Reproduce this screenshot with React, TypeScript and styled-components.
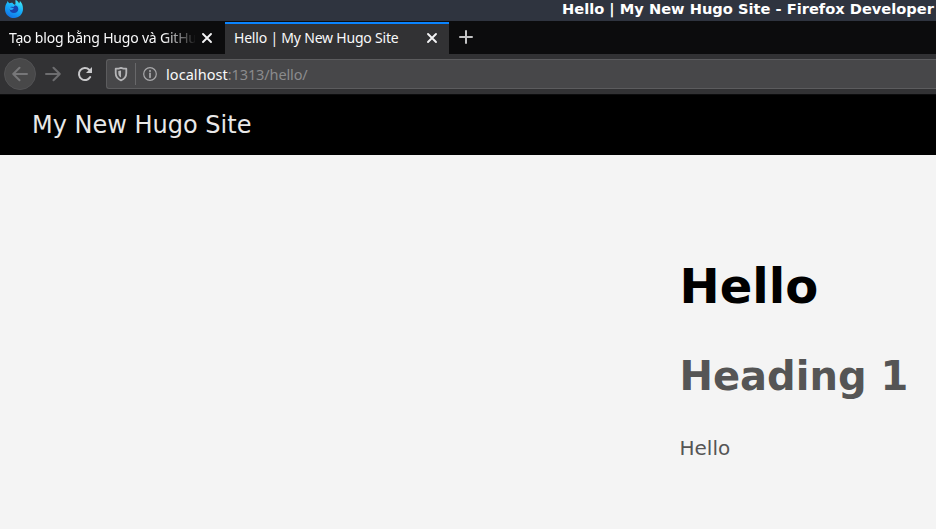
import React from "react";
import styled, { createGlobalStyle } from "styled-components";

const GlobalStyle = createGlobalStyle`
  * { box-sizing: border-box; }
  body { margin: 0; overflow: hidden; }
`;

const Window = styled.div`
  width: 936px;
  height: 529px;
  display: flex;
  flex-direction: column;
  overflow: hidden;
  background: #f4f4f4;
  font-family: "DejaVu Sans", sans-serif;
`;

const TitleBar = styled.header`
  flex: 0 0 21px;
  display: flex;
  justify-content: space-between;
  padding: 0 0 0 4px;
  background: #2f343f;
  color: #fff;
`;

const WindowTitle = styled.div`
  width: 374px;
  font: bold 14.64px/18px "DejaVu Sans", sans-serif;
  white-space: nowrap;
`;

const TabStrip = styled.div`
  flex: 0 0 33px;
  display: flex;
  background: #0c0c0d;
`;

const Tab = styled.div<{ $active?: boolean }>`
  width: ${(p) => (p.$active ? 224 : 225)}px;
  display: flex;
  align-items: center;
  padding: 0 9px;
  border-top: 2px solid ${(p) => (p.$active ? "#0a84ff" : "transparent")};
  margin-top: ${(p) => (p.$active ? 1 : 0)}px;
  padding-bottom: ${(p) => (p.$active ? 1 : 0)}px;
  background: ${(p) => (p.$active ? "#323234" : "transparent")};
  color: #f9f9fa;
`;

const TabLabel = styled.span<{ $fade?: boolean }>`
  flex: 0 0 186px;
  overflow: hidden;
  white-space: nowrap;
  font: 14px/24px "Noto Sans", sans-serif;
  letter-spacing: -0.2px;
  padding-bottom: 2px;
  ${(p) => p.$fade && "mask-image: linear-gradient(to right, #000 154px, transparent 188px);"}
`;

const CloseIcon = styled.svg`
  flex: none;
  width: 12px;
  height: 12px;
  margin: 0 0 2px 6px;
`;

const NewTab = styled.div`
  width: 34px;
  display: grid;
  place-items: center;
  padding-bottom: 1px;
`;

const Toolbar = styled.div`
  flex: 0 0 41px;
  display: flex;
  align-items: center;
  padding: 0 0 1px 4px;
  background: #323234;
  border-bottom: 1px solid #0c0c0d;
`;

const NavButton = styled.div<{ $round?: boolean }>`
  width: 32px;
  height: 32px;
  display: grid;
  place-items: center;
  padding-left: ${(p) => (p.$round ? 0 : 2)}px;
  border-radius: 50%;
  border: 1px solid ${(p) => (p.$round ? "#525254" : "transparent")};
  background: ${(p) => (p.$round ? "#484849" : "transparent")};
`;

const UrlBar = styled.div`
  flex: 1;
  height: 30px;
  margin-left: 6px;
  display: flex;
  align-items: center;
  padding-left: 7px;
  border: 1px solid #5c5c5e;
  border-right: 0;
  border-radius: 3px 0 0 3px;
  background: #474749;
`;

const Separator = styled.div`
  width: 1px;
  height: 22px;
  margin: 0 7px;
  background: #68686a;
`;

const Address = styled.div`
  margin-left: 9px;
  font: 14.5px/24px "Noto Sans", sans-serif;
  letter-spacing: -0.12px;
  color: #8b8b8d;
`;

const Host = styled.span`
  color: #f9f9fa;
  letter-spacing: 0.06px;
`;

const SiteHeader = styled.div`
  flex: 0 0 60px;
  padding: 1px 32px 0;
  background: #000;
  color: #e8e8e8;
  font-size: 24px;
  line-height: 59px;
`;

const Article = styled.main`
  padding: 103px 0 0 679.5px;
  color: #555;
  white-space: nowrap;
`;

const PageTitle = styled.h1`
  margin: 0;
  color: #000;
  font-size: 48px;
  line-height: 56px;
`;

const Heading = styled.h2`
  margin: 39px 0 0;
  font-size: 40px;
  line-height: 47px;
`;

const Paragraph = styled.p`
  margin: 36px 0 0;
  font-size: 20px;
  line-height: 24px;
`;

const Close = () => (
  <CloseIcon viewBox="0 0 12 12" fill="none" stroke="#f4f4f5" strokeWidth="1.9" strokeLinecap="round">
    <path d="M2 2l8 8M10 2l-8 8" />
  </CloseIcon>
);

const Firefox = () => (
  <svg width="20" height="18" viewBox="0 0 20 18">
    <defs>
      <linearGradient id="flame" x1="0.8" y1="0" x2="0.3" y2="1">
        <stop offset="0" stopColor="#42e9f5" />
        <stop offset="0.45" stopColor="#17b1fa" />
        <stop offset="1" stopColor="#1172e8" />
      </linearGradient>
    </defs>
    <path
      d="M11.500 0C13.500 .6 14.500 2 15 3.400c.7-.7.9-1.700.8-2.600C18 2.800 19 5.700 19 9c0 5-4 9-9 9s-9-3.800-9-8.800C1 6.200 1.800 4 3.200 2.200l.6-1.500C4.100 2 4.600 2.800 5.400 3.200c1.100-.6 2-.7 3.100-.4C9 4 9.800 4.500 11 4.800 12 4 11.200 2 11.500 0z"
      fill="url(#flame)"
    />
    <path d="M6 7.500c1-.9 2.200-.7 3.200-.3L11 5.300c2.200.2 3.300 1.900 3.300 4 0 2.300-2 3.800-4.300 3.800-2.600 0-4.500-1.800-4.300-4.100z" fill="#1944ad" />
    <path d="M5 7.400c1.800-.8 3.500.5 4.800.9-.4 1.200-1.700 1.200-2.600 1.800C6.200 9.800 5.400 9 5 7.400z" fill="#28a8f5" />
  </svg>
);

export default function App() {
  return (
    <>
      <GlobalStyle />
      <Window>
        <TitleBar>
          <Firefox />
          <WindowTitle>Hello | My New Hugo Site - Firefox Developer</WindowTitle>
        </TitleBar>
        <TabStrip>
          <Tab>
            <TabLabel $fade>Tạo blog bằng Hugo và GitHu</TabLabel>
            <Close />
          </Tab>
          <Tab $active>
            <TabLabel>Hello | My New Hugo Site</TabLabel>
            <Close />
          </Tab>
          <NewTab>
            <svg width="14" height="14" viewBox="0 0 14 14" stroke="#c3c3c4" strokeWidth="2" strokeLinecap="round">
              <path d="M7 1v12M1 7h12" />
            </svg>
          </NewTab>
        </TabStrip>
        <Toolbar>
          <NavButton $round>
            <svg width="16" height="16" viewBox="0 0 16 16" fill="none" stroke="#777779" strokeWidth="2" strokeLinecap="round" strokeLinejoin="round">
              <path d="M15 8H1.200M7.500 1.700L1.200 8l6.300 6.300" />
            </svg>
          </NavButton>
          <NavButton>
            <svg width="16" height="16" viewBox="0 0 16 16" fill="none" stroke="#6d6d6f" strokeWidth="2" strokeLinecap="round" strokeLinejoin="round">
              <path d="M1 8h13.800M8.500 1.700L14.800 8l-6.300 6.300" />
            </svg>
          </NavButton>
          <NavButton>
            <svg width="16" height="16" viewBox="0 0 16 16" fill="none" stroke="#c8c8ca" strokeWidth="2" strokeLinecap="round">
              <path d="M13.200 11A6 6 0 1 1 12.200 3.800" />
              <path d="M15 1v6H9z" fill="#c8c8ca" stroke="none" />
            </svg>
          </NavButton>
          <UrlBar>
            <svg width="14" height="16" viewBox="0 0 14 16" fill="none" stroke="#b5b5b7" strokeWidth="1.800" strokeLinejoin="round">
              <path d="M7 1.800C5.500 2.400 3.500 2.700 1.700 2.700V7c0 3.500 1.800 6 5.300 7.300C10.500 13 12.300 10.500 12.300 7V2.700C10.500 2.700 8.500 2.400 7 1.800z" />
              <path d="M7 4.500v7C5.200 10.500 4.300 9 4.300 7V5z" fill="#b5b5b7" stroke="none" />
            </svg>
            <Separator />
            <svg width="14" height="14" viewBox="0 0 14 14" fill="none" stroke="#a9a9ab">
              <circle cx="7" cy="7" r="6.300" strokeWidth="1.200" />
              <path d="M7 6.300v4" strokeWidth="1.700" strokeLinecap="round" />
              <circle cx="7" cy="3.900" r="1" fill="#a9a9ab" stroke="none" />
            </svg>
            <Address><Host>localhost</Host>:1313/hello/</Address>
          </UrlBar>
        </Toolbar>
        <SiteHeader>My New Hugo Site</SiteHeader>
        <Article>
          <PageTitle>Hello</PageTitle>
          <Heading>Heading 1</Heading>
          <Paragraph>Hello</Paragraph>
        </Article>
      </Window>
    </>
  );
}
